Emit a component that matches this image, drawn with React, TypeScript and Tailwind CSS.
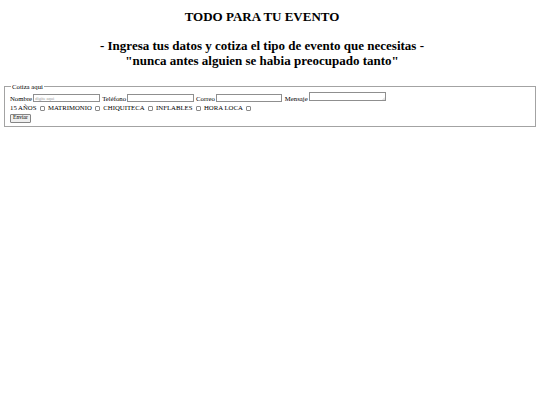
const categorias = ["15 AÑOS", "MATRIMONIO", "CHIQUITECA", "INFLABLES", "HORA LOCA"];

const inputClass =
  "w-[66.5px] h-[8px] border border-[#8f8f8f] bg-white px-[1px] text-[4.5px] leading-none placeholder:text-[#9a9a9a] outline-none";

export default function App() {
  return (
    <div className="min-h-screen bg-white px-[4px] pt-[9px] text-black font-['Liberation_Serif',serif] text-[6.75px] leading-[1.15]">
      <div className="pr-[16px] text-center font-bold text-[13px]">
        <h2 className="leading-[15px]">TODO PARA TU EVENTO</h2>
        <h2 className="mt-[14px] leading-[15px]">
          - Ingresa tus datos y cotiza el tipo de evento que necesitas -
          <br />
          "nunca antes alguien se habia preocupado tanto"
        </h2>
      </div>

      <form className="mt-[15px]" onSubmit={(e) => e.preventDefault()}>
        <fieldset className="border border-[#a3a3a3] px-[5px] pt-[1px] pb-[3px]">
          <legend className="px-[1px] ml-[1px]">Cotiza aqui</legend>

          <div className="flex items-end">
            <label htmlFor="nombre" className="mr-[1px]">Nombre</label>
            <input id="nombre" className={inputClass} placeholder="digite aqui" />
            <label htmlFor="telefono" className="ml-[2.5px] mr-[1px]">Teléfono</label>
            <input id="telefono" className={inputClass} />
            <label htmlFor="correo" className="ml-[2.5px] mr-[1px]">Correo</label>
            <input id="correo" className={inputClass} />
            <label htmlFor="mensaje" className="ml-[2.5px] mr-[1px]">Mensaje</label>
            <div className="relative mb-[1px]">
              <textarea
                id="mensaje"
                className="block w-[77px] h-[9.5px] border border-[#8f8f8f] bg-white text-[4.5px] resize-none outline-none"
              />
              {/* tiny resize grip */}
              <svg className="absolute right-[1px] bottom-[1px] w-[3px] h-[3px]" viewBox="0 0 3 3">
                <path d="M0.5 3 L3 0.5 M1.8 3 L3 1.8" stroke="#9a9a9a" strokeWidth="0.4" />
              </svg>
            </div>
          </div>

          <div className="mt-[2px] flex items-center">
            {categorias.map((c) => (
              <label key={c} className="flex items-center mr-[3px]">
                <span>{c}</span>
                <input
                  type="checkbox"
                  className="ml-[3.5px] appearance-none w-[5px] h-[5px] border border-[#8a8a8a] rounded-[1px] bg-white"
                />
              </label>
            ))}
          </div>

          <button
            type="submit"
            className="mt-[1.5px] h-[9px] px-[2px] border border-[#858585] rounded-[1px] bg-[#efefef] text-[5.6px] leading-none"
          >
            Enviar
          </button>
        </fieldset>
      </form>
    </div>
  );
}
